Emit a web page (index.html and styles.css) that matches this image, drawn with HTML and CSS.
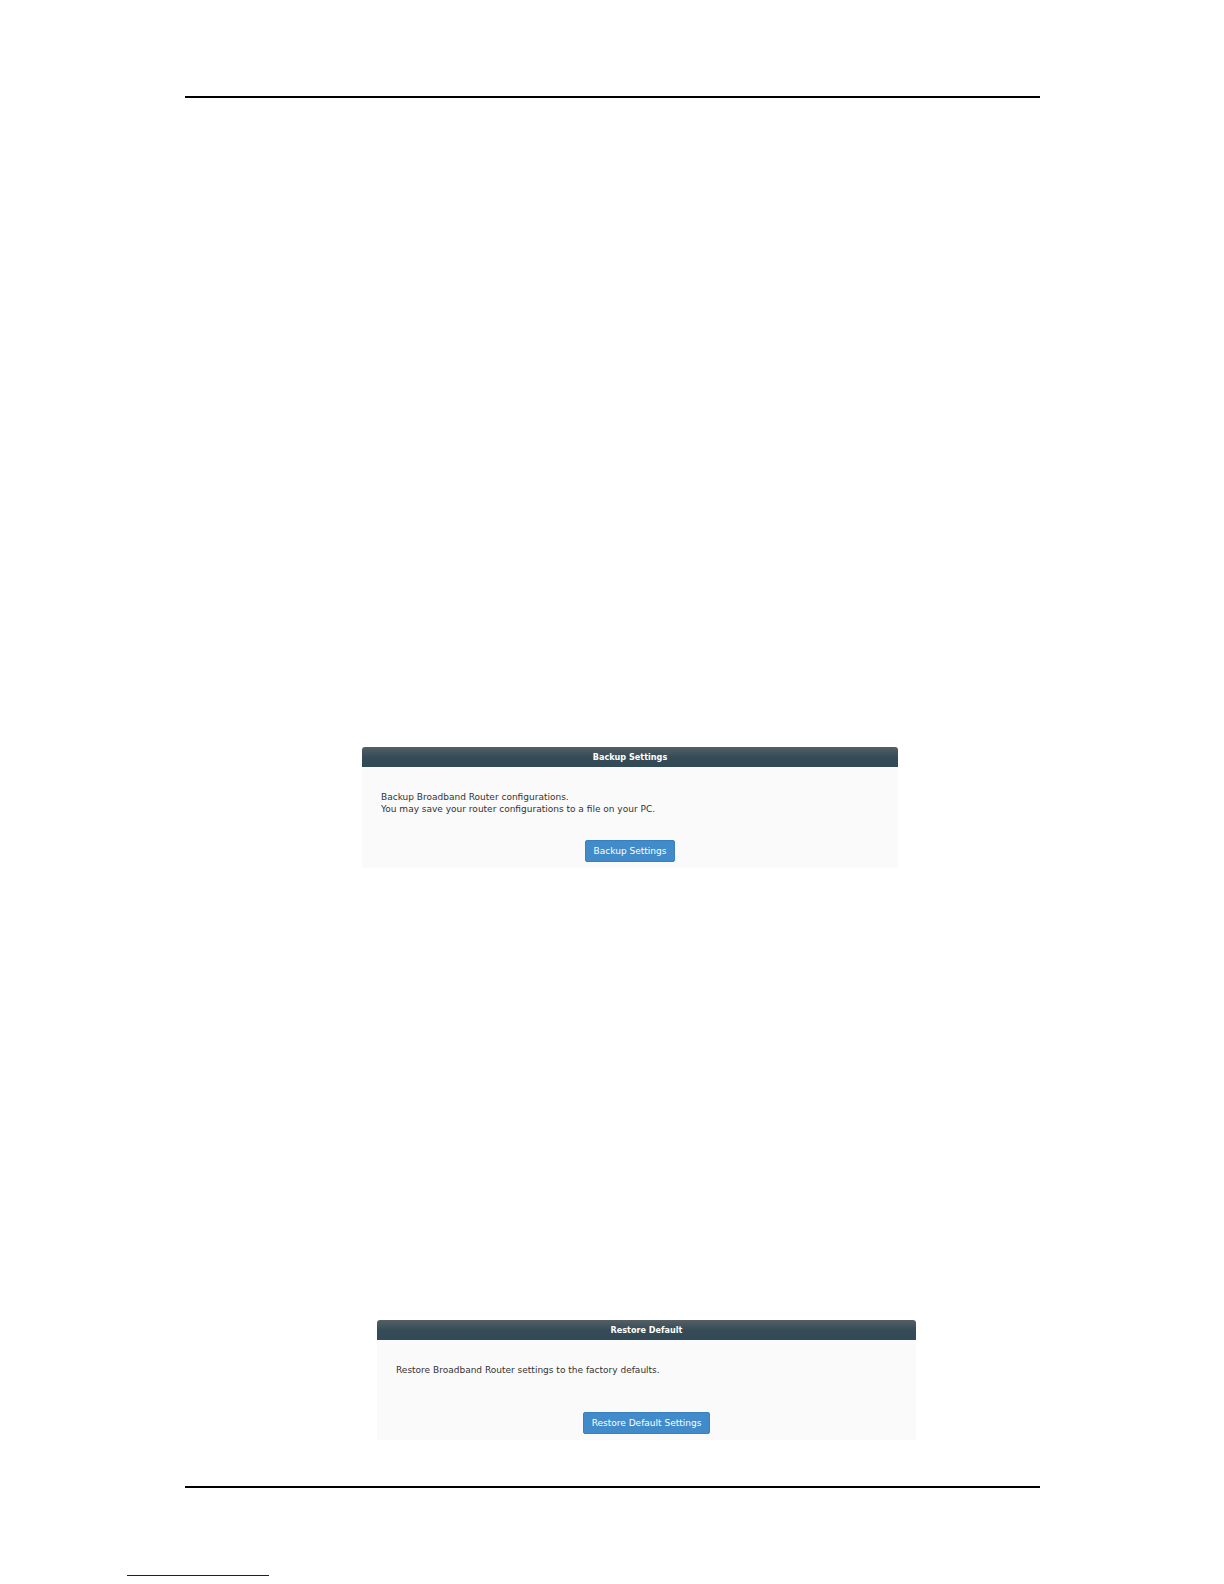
FILE: index.html
```
<!DOCTYPE html>
<html lang="en">
<head>
<meta charset="utf-8">
<meta name="viewport" content="width=device-width, initial-scale=1">
<title>Backup Settings</title>
<link rel="stylesheet" href="styles.css">
</head>
<body>

<main class="sheet">
  <hr class="rule">

  <section class="panel panel-backup">
    <h2 class="panel-title">Backup Settings</h2>
    <form class="panel-body" onsubmit="event.preventDefault()">
      <p>Backup Broadband Router configurations.<br>
      You may save your router configurations to a file on your PC.</p>
      <button type="submit" class="btn">Backup Settings</button>
    </form>
  </section>

  <section class="panel panel-restore">
    <h2 class="panel-title">Restore Default</h2>
    <form class="panel-body" onsubmit="event.preventDefault()">
      <p>Restore Broadband Router settings to the factory defaults.</p>
      <button type="submit" class="btn">Restore Default Settings</button>
    </form>
  </section>

  <hr class="rule">
</main>

<hr class="foot-rule">

</body>
</html>
```
FILE: styles.css
```
* {box-sizing: border-box;}

body {
  margin: 0;
  background: white;
  color: #333;
  font-family: Verdana, "DejaVu Sans", sans-serif;
  font-size: 9px;
  line-height: 12px;
}

.sheet {
  padding: 96px 184px 0 185px;
}

.rule {
  margin: 0;
  border: none;
  border-top: 2px solid black;
}

.panel {
  background: #fafafa;
  border-radius: 3px 3px 0 0;
}

.panel-backup {
  margin: 649px 142px 0 177px;
}

.panel-restore {
  margin: 452px 124px 46px 192px;
}

.panel-title {
  margin: 0;
  padding: 4px;
  border-radius: 3px 3px 0 0;
  background: linear-gradient(#555f64, #354c58 50%, #324a56);
  color: white;
  font-family: "DejaVu Sans Condensed", Verdana, sans-serif;
  font-size: 9px;
  font-weight: bold;
  text-align: center;
}

.panel-body {
  display: flex;
  flex-direction: column;
  justify-content: space-between;
  min-height: 101px;
  padding: 24px 19px 6px;
}

.panel-restore .panel-body {
  min-height: 100px;
}

.panel-body p {
  margin: 0;
}

/* Blue action button, centered under the text */
.btn {
  align-self: center;
  padding: 4px 8px;
  border: 1px solid #3a80c0;
  border-radius: 2px;
  background: #428bca;
  color: white;
  font: inherit;
  cursor: pointer;
}

.btn:hover {
  background: #3276b1;
}

/* Short blue line at the bottom of the page */
.foot-rule {
  width: 142px;
  margin: 87px 0 8px 127px;
  border: none;
  border-top: 1px solid #15157d;
}
```
